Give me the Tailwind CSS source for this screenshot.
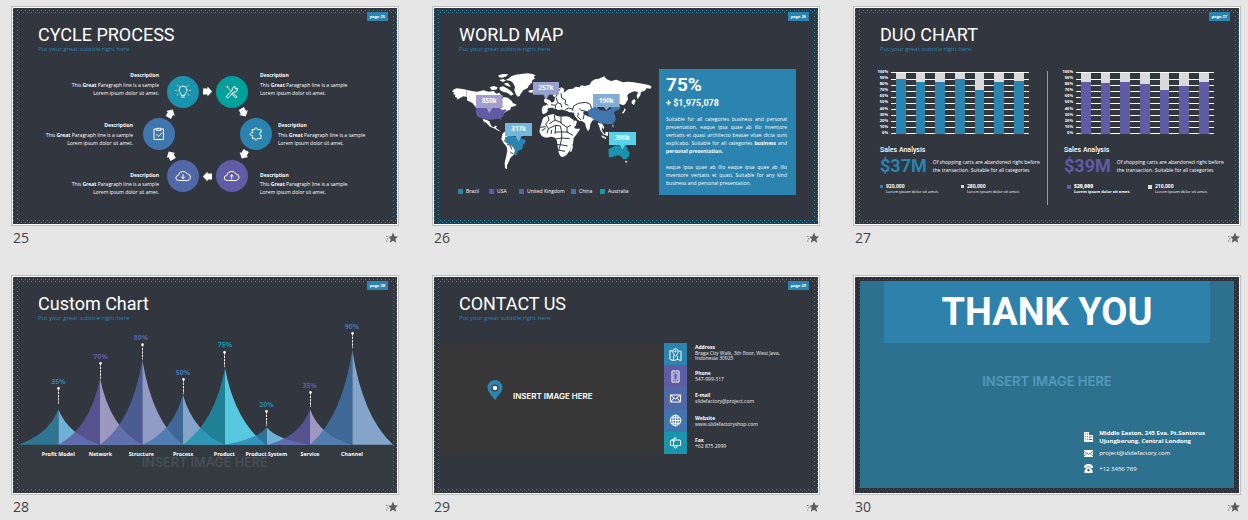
<!DOCTYPE html>
<html lang="en">
<head>
<meta charset="utf-8">
<meta name="viewport" content="width=device-width, initial-scale=1">
<title>Slide sorter</title>
<script src="https://cdn.jsdelivr.net/npm/@tailwindcss/browser@4"></script>
</head>
<body class="bg-[#e6e6e6] font-['Open_Sans','Noto_Sans',sans-serif] text-white">

<!-- Shared symbols -->
<svg class="absolute h-0 w-0" aria-hidden="true">
  <defs>
    <pattern id="dots-row" width="4" height="4" patternUnits="userSpaceOnUse"><path fill="#2c8cae" d="M0 2h1v1H0zM2 0h1v1H2z"/></pattern>
    <pattern id="dots-left" width="8" height="4" patternUnits="userSpaceOnUse"><path fill="#2c8cae" d="M0 0h1v1H0zM4 2h1v1H4z"/></pattern>
    <pattern id="dots-right" width="4" height="4" patternUnits="userSpaceOnUse"><path fill="#2c8cae" d="M0 0h1v1H0zM3 2h1v1H3z"/></pattern>
    <symbol id="frame" viewBox="0 0 384 216">
      <rect x="5" y="2" width="379" height="3" fill="url(#dots-row)"/>
      <rect x="5" y="212" width="379" height="3" fill="url(#dots-row)"/>
      <rect y="0" width="5" height="216" fill="url(#dots-left)"/>
      <rect x="380" y="5" width="4" height="207" fill="url(#dots-right)"/>
    </symbol>
    <symbol id="star" viewBox="0 0 12 12">
      <path fill="#5c5c5c" d="M7 .5l1.500 3.700 3.500.3-2.700 2.400.9 3.900L7 8.700l-3.200 2.100.9-3.900L2.400 4.700l3.100-.5z"/>
      <path fill="#777" d="M0 4h1.400v1H0zM1 6.200h1.400v1H1zM0 8.400h1.400v1H0z"/>
    </symbol>
    <symbol id="arrow" viewBox="-5 -5 10 10"><path fill="#fff" d="M-4.500-3H0v-2l4.600 5L0 5V3h-4.500z"/></symbol>
  </defs>
</svg>

<main class="grid grid-cols-3 gap-x-[33px] gap-y-[27px] pt-[6px] pr-[7px] pl-[11px]">

  <!-- 25 -->
  <figure>
    <div class="border border-[#bdbdbd] bg-white p-px">
      <section class="relative aspect-[16/9] overflow-hidden bg-[#32363f]">
        <svg class="absolute inset-0 h-full w-full" aria-hidden="true"><use href="#frame"/></svg>
        <header class="flex items-start justify-between pr-[9px] pl-[25px]">
          <div class="pt-[17px]">
            <h2 class="font-[Roboto] text-[18px] leading-[20px]">CYCLE PROCESS</h2>
            <p class="text-[6px] leading-[8px] text-[#2c82b4]">Put your great subtitle right here</p>
          </div>
          <span class="relative mt-[4px] bg-[#2b83b0] px-[3px] text-[4px] leading-[9px] font-bold">page 25</span>
        </header>
        <div class="relative mt-[18px] text-[5px] leading-[8px]">
          <svg class="absolute top-[4px] left-[129px] h-[118px] w-[131px]" viewBox="142 75 131 118" fill="none" stroke="#fff" stroke-linecap="round" stroke-linejoin="round" aria-hidden="true">
            <g stroke="none">
              <circle cx="183" cy="92" r="16" fill="#1a93ad"/><circle cx="232" cy="92" r="16" fill="#00a19b"/>
              <circle cx="159" cy="134" r="16" fill="#4175ad"/><circle cx="256" cy="134" r="16" fill="#2b83b0"/>
              <circle cx="183" cy="176" r="16" fill="#5067a8"/><circle cx="232" cy="176" r="16" fill="#5f5ca5"/>
              <use href="#arrow" x="-5" y="-5" width="10" height="10" transform="translate(207.500 91.500)"/>
              <use href="#arrow" x="-5" y="-5" width="10" height="10" transform="translate(243.500 112.500) rotate(60)"/>
              <use href="#arrow" x="-5" y="-5" width="10" height="10" transform="translate(244 154.500) rotate(120)"/>
              <use href="#arrow" x="-5" y="-5" width="10" height="10" transform="translate(207.500 176.500) rotate(180)"/>
              <use href="#arrow" x="-5" y="-5" width="10" height="10" transform="translate(171 155.500) rotate(240)"/>
              <use href="#arrow" x="-5" y="-5" width="10" height="10" transform="translate(170.500 113.500) rotate(300)"/>
            </g>
            <!-- bulb -->
            <path stroke-width=".9" d="M181.300 95c0-1.700-2.300-2.700-2.300-5a4 4 0 018 0c0 2.300-2.300 3.300-2.300 5zM181.500 97h3M176.500 90.500h-.6M189.500 90.500h.6M178 86l-.6-.5M188 86l.6-.5M178 94.500l-.6.5M188 94.500l.6.5"/>
            <!-- tools -->
            <path stroke-width="1" d="M227 87l3.500 3.500M226.500 86.500l1.500.5M233 93l3.500 3.200a.8.8 0 01-1.300 1.300L232 94M237 88.500l-1.800.4.3-2a2.600 2.600 0 00-3.200 3.400l-5.600 5.500a1.100 1.100 0 001.700 1.700l5.500-5.600a2.600 2.600 0 003.400-3.200z"/>
            <!-- clipboard -->
            <path stroke-width="1" d="M157 129h-3v10.500h9.500V129H161M157 128.300h4v2h-4zM156.500 134.500l2 2 3.500-3.700"/>
            <!-- puzzle -->
            <path stroke-width="1" d="M252.500 129.500h2.200c-.5-2 3-2 2.500 0h3.800v3.200c-2-.6-2 2.800 0 2.300v3.500h-3.700c.5 1.900-3 1.900-2.500 0h-2.300v-3c-3 1-3.400-3.700 0-2.800z"/>
            <!-- clouds -->
            <path stroke-width="1" d="M178.500 180.500a2.500 2.500 0 01-.3-5 5 5 0 019.300-1.500 3.300 3.300 0 01.500 6.500zM183 174.500v4M181.500 177l1.500 1.500 1.500-1.500"/>
            <path stroke-width="1" d="M227 180.500a2.500 2.500 0 01-.3-5 5 5 0 019.300-1.500 3.300 3.300 0 01.500 6.500zM231.700 179v-4M230.200 176.300l1.500-1.500 1.500 1.500"/>
          </svg>
          <div class="relative grid grid-cols-2 gap-y-[24px]">
            <div class="pr-[46px] text-right"><h3 class="mb-[2px] font-bold">Description</h3><p>This <b>Great</b> Paragraph line is a sample<br>Lorem ipsum dolor sit amet.</p></div>
            <div class="pl-[55px]"><h3 class="mb-[2px] font-bold">Description</h3><p>This <b>Great</b> Paragraph line is a sample<br>Lorem ipsum dolor sit amet.</p></div>
            <div class="pr-[72px] text-right"><h3 class="mb-[2px] font-bold">Description</h3><p>This <b>Great</b> Paragraph line is a sample<br>Lorem ipsum dolor sit amet.</p></div>
            <div class="pl-[73px]"><h3 class="mb-[2px] font-bold">Description</h3><p>This <b>Great</b> Paragraph line is a sample<br>Lorem ipsum dolor sit amet.</p></div>
            <div class="pr-[46px] text-right"><h3 class="mb-px font-bold">Description</h3><p>This <b>Great</b> Paragraph line is a sample<br>Lorem ipsum dolor sit amet.</p></div>
            <div class="pl-[55px]"><h3 class="mb-px font-bold">Description</h3><p>This <b>Great</b> Paragraph line is a sample<br>Lorem ipsum dolor sit amet.</p></div>
          </div>
        </div>
      </section>
    </div>
    <figcaption class="flex items-center justify-between pt-[2px] pr-px pl-[2px] text-[14px] leading-[20px] text-[#444]">25<svg class="h-[12px] w-[12px]" aria-hidden="true"><use href="#star"/></svg></figcaption>
  </figure>

  <!-- 26 -->
  <figure>
    <div class="border border-[#bdbdbd] bg-white p-px">
      <section class="relative aspect-[16/9] overflow-hidden bg-[#32363f]">
        <svg class="absolute inset-0 h-full w-full" aria-hidden="true"><use href="#frame"/></svg>
        <header class="flex items-start justify-between pr-[9px] pl-[25px]">
          <div class="pt-[17px]">
            <h2 class="font-[Roboto] text-[18px] leading-[20px]">WORLD MAP</h2>
            <p class="text-[6px] leading-[8px] text-[#2c82b4]">Put your great subtitle right here</p>
          </div>
          <span class="relative mt-[4px] bg-[#2b83b0] px-[3px] text-[4px] leading-[9px] font-bold">page 26</span>
        </header>
        <div class="relative flex items-start justify-between pr-[22px] pl-[11px]">
          <div class="pt-[7px]">
            <svg class="h-[120px] w-[210px]" viewBox="0 0 630 360" role="img" aria-label="World map">
              <g fill="#fff">
                <path d="M24 90l10-5 14 1 17 3v22l-10-2-8 4-12 6 2-6-7-2 1-6-7-3 4-4-6-3z"/>
                <path d="M66 90l14 3 16 2 20-4 14 4 16-2 8 8 10-3 4 8-6 5 8 8 6-8 12 2 10 8 6 8 12 6-8 4-10 2-2 8-10 4-12 8-18-4H96l-4-16-10-12-16-8z"/>
                <path d="M160 46l14-4 16 1-6 6-12 4-10-1zM163 60l12-3 8 5-10 4zM178 70l10-2 4 5 6 8-8-2-10-4zM134 82l12-4 12 4-4 7-14 1zM164 82l10-3 12 6 12 8 8 10-8 4-10-8-14-4-10-6z"/>
                <path d="M190 56l10-8 12-4 16-2 20-2 14 2 10 4-6 4 4 6-8 4-2 10-8 6-4 8-12 6-8 10-4 8-6 2-6-8-4-12 2-10-8-14-8-4-12-2z"/>
                <path d="M250 92l12-3 7 4-8 5-9-1z"/>
                <path d="M113 176l12 4 8 4 4 10 4 6 6 1 4-4 4 1-2 6 8 6 6 4-6-1-14-8-12-5-8-8-6-6-2 2-4-6z"/>
                <path d="M172 222l6-7 14 2 12 5 4 6-14 0-10 8 0 12 10 4 14 12 4 12-6 8-10 10-6 14-4 8 0 12-6-4-1-16 4-16 4-20-2-12-10-12-6-10z"/>
                <path d="M290 150l4-12 10-2 2-6-6-6 6-6 8 2 6 8 8-4 2-12-6-4 2-10 12-12 12-4 8 6-2 10 14-10 14-2 8-6 12 2 4-6 12 2 14-4 6-10 10-6 12-2 16-7 6 8 14 6 16-4 20 8 14-2 18 2 26 4 20 4 8 5-4 6-12-1-4 7-12 4-2 10-8 12-3-10 4-12-12-2-14 6-6 6 2 12-8 14-6 4-16-6-16 8-20 2-14-6-12 8-10 10 2 8-10 6-8-10-14-2-4 8 10 10-4 6-16 4-14-14-2-10-18-2-12 2-12-4-12-8-6 4 6 10-8-2-8-10-8 4-6 8-10 3z"/>
                <path d="M298 118l5-8 3 8 5 8-10 3-4-5z"/>
                <path d="M294 174l14-8 18-4 8 5 14 3 14-1 8 1 8 22 14 14h14l-12 18-8 10-2 18-6 8-4 12-10 14-10 5-8-2-6-14-2-16-2-16-6-10-10-3-18 3-12-5-7-13 3-14z"/>
                <path d="M377 262l5-8 2 6-4 14-5 2z"/>
                <path d="M362 172l10-2 10 8 14 6-4 14-12 6-8-12z"/>
                <path d="M392 158l22 2 12 8 26 8-10 6-6 10-2 14-5 8-6-12-3-12-8-6-14-4z"/>
                <path d="M458 188l12 2 8 12-2 6-6-8 2 14 8 10-3 2-10-14-4-12zM470 226l14 7-2 4-12-6zM482 215l8 2-2 12-8-4zM560 123l8-6 4 5-5 14-7-6zM530 160l6-8 3-8 3 6-6 10zM502 192l4 6-2 6zM540 302l8 2-5 5z"/>
              </g>
              <!-- country borders -->
              <g fill="none" stroke="#32363f" stroke-width="3">
                <path d="M308 166l4 14-10 12 8 14-4 14M328 164l2 16-18 12M348 170v20l18 12M330 180l20 8M310 206l22-10 14 2M332 196l-2 26M346 198l4 18 20 0M330 216l20 0M350 216l0 18 24 2M326 238l24-4M350 234l-4 20 22 4M326 254l20 0M346 254l-6 20M366 202l0 14 18 10M366 202l12-6M340 270l20 4M286 202l16-2M290 212l12-8M318 222l2-12"/>
                <path d="M318 134l14 2 6-8 10 4 2 10M332 136l-2 12M338 128l-4-14M348 100l2 14 12 6-2 12 10 4M332 112l8-18 6-8M360 150l10-6 14 4M382 152l4-14 14-8 22-3 14 6 4 14-12 8-20-4-6-6M400 158l-2 12 10 10M418 162l-4 16M384 166l8 8-6 10"/>
                <path d="M186 252l10 4 4 12M196 276l8 6M184 240l-8 4"/>
                <path d="M308 147l14-3 12 9 16-3 20 6-6 8-20 2-12-6-16-2z" fill="#32363f"/>
              </g>
              <path fill="#5f5ca5" d="M93 144h72l6 6 10-2 4 3-8 8-2 10-8 6 2 6-8-5-22 3-14 0-16-6-12-3-4-12z"/>
              <path fill="#2b83b0" d="M180 232l12-5 10-1 6 4 12-2 6 6 16 6-1 8-7 6-2 14-12 4-4 10-4 6-5-8 3-10-6-10-10-8-14-6z"/>
              <path fill="#4175ad" d="M428 152l14-8 8-5 14 10 18 4 16-6-2-8 12-4 18 6-4 8-10 4-6 6 4 6 2 14-8 12-14 2-10-2-12 0-10-8-10-2-10-10-8-6z"/>
              <path fill="#1a93ad" d="M490 268l12-6 12-6 10 2 8 10 10-13 6 14 5 8-1 12-8 9-10-1-6-9-10-2-18 6-8 0z"/>
              <path fill="#5067a8" d="M304 134l6-2-3 5z"/>
              <g>
                <path fill="#a29dca" d="M93 105h80v39h-31l-9 16-8-16H93z"/><path fill="#97a2cf" d="M264 66h78v38h-30l-9 16-8-16h-31z"/>
                <path fill="#85acd5" d="M444 102h80v39h-31l-9 10-8-10h-32z"/><path fill="#72b7dd" d="M180 189h81v39h-31l-9 17-9-17h-32z"/>
                <path fill="#59d1e9" d="M492 216h81v39h-32l-9 14-8-14h-32z"/>
              </g>
              <g class="text-[19px] font-bold" fill="#fff" text-anchor="middle">
                <text x="133" y="129">850k</text><text x="303" y="90">257k</text><text x="484" y="128">190k</text><text x="221" y="213">317k</text><text x="532" y="239">390k</text>
              </g>
            </svg>
            <ul class="mt-[7px] ml-[13px] grid grid-cols-[31px_30px_52px_29px_auto] text-[5px] leading-[8px]">
              <li class="flex items-center gap-[3px]"><i class="size-[5px] bg-[#2b83b0]"></i>Brazil</li>
              <li class="flex items-center gap-[3px]"><i class="size-[5px] bg-[#5f5ca5]"></i>USA</li>
              <li class="flex items-center gap-[3px]"><i class="size-[5px] bg-[#5067a8]"></i>United Kingdom</li>
              <li class="flex items-center gap-[3px]"><i class="size-[5px] bg-[#4175ad]"></i>China</li>
              <li class="flex items-center gap-[3px]"><i class="size-[5px] bg-[#1a93ad]"></i>Australia</li>
            </ul>
          </div>
          <div class="mt-[16px] h-[126px] w-[137px] bg-[#2b83b0] pt-[6px] pr-[9px] pl-[7px] text-[5px] leading-[8px]">
            <p class="font-[Roboto] text-[19px] leading-[20px] font-bold">75%</p>
            <p class="mt-[3px] font-[Roboto] text-[9px] leading-[11px] font-bold">+ $1,975,078</p>
            <p class="mt-[6px] [&>span]:block [&>span]:[text-align-last:justify]"><span>Suitable for all categories business and personal</span><span>presentation, eaque ipsa quae ab illo inventore</span><span>veritatis et quasi architecto beatae vitae dicta sunt</span><span>explicabo. Suitable for all categories <b>business</b> and</span><b>personal presentation.</b></p>
            <p class="mt-[8px] [&>span]:block [&>span]:[text-align-last:justify]"><span>eaque ipsa quae ab illo eaque ipsa quae ab illo</span><span>inventore veritatis et quasi, Suitable for any kind</span>business and personal presentation.</p>
          </div>
        </div>
      </section>
    </div>
    <figcaption class="flex items-center justify-between pt-[2px] pr-px pl-[2px] text-[14px] leading-[20px] text-[#444]">26<svg class="h-[12px] w-[12px]" aria-hidden="true"><use href="#star"/></svg></figcaption>
  </figure>

  <!-- 27 -->
  <figure>
    <div class="border border-[#bdbdbd] bg-white p-px">
      <section class="relative aspect-[16/9] overflow-hidden bg-[#32363f]">
        <svg class="absolute inset-0 h-full w-full" aria-hidden="true"><use href="#frame"/></svg>
        <header class="flex items-start justify-between pr-[9px] pl-[25px]">
          <div class="pt-[17px]">
            <h2 class="font-[Roboto] text-[18px] leading-[20px]">DUO CHART</h2>
            <p class="text-[6px] leading-[8px] text-[#2c82b4]">Put your great subtitle right here</p>
          </div>
          <span class="relative mt-[4px] bg-[#2b83b0] px-[3px] text-[4px] leading-[9px] font-bold">page 27</span>
        </header>
        <div class="relative mt-[16px] flex items-start pl-[22px]">
          <div class="w-[170px]">
            <div class="flex gap-[3px]">
              <div class="flex h-[67px] w-[11px] flex-col justify-between text-right text-[4px] leading-[6px] font-bold"><span>100%</span><span>90%</span><span>80%</span><span>70%</span><span>60%</span><span>50%</span><span>40%</span><span>30%</span><span>20%</span><span>10%</span><span>0%</span></div>
              <svg class="h-[67px] w-[138px]" viewBox="153 207 414 201" role="img" aria-label="Stacked column chart">
                <path stroke="#fff" stroke-width="3" d="M153 217.500h414M153 238.500h414M153 256.500h414M153 274.500h414M153 292.500h414M153 310.500h414M153 328.500h414M153 346.500h414M153 364.500h414M153 382.500h414M153 400.500h414"/>
                <path fill="#dadada" d="M168 219h30v24h-30zM228 219h27v30h-27zM285 219h30v30h-30zM345 219h30v24h-30zM405 219h27v54h-27zM462 219h30v30h-30zM522 219h30v27h-30z"/>
                <path fill="#2b83b0" d="M168 237h30v165h-30zM228 246h27v156h-27zM285 246h30v156h-30zM345 237h30v165h-30zM405 270h27v132h-27zM462 246h30v156h-30zM522 243h30v159h-30z"/>
              </svg>
            </div>
            <div class="pl-[3px]">
              <h3 class="mt-[10px] font-[Roboto] text-[7px] leading-[9px] font-medium">Sales Analysis</h3>
              <div class="flex items-center gap-[6px]">
                <strong class="font-[Roboto] text-[18px] leading-[22px] font-bold text-[#2b83b0]">$37M</strong>
                <p class="text-[5px] leading-[8px] whitespace-nowrap">Of shopping carts are abandoned right before<br>the transaction. Suitable for all categories</p>
              </div>
              <div class="mt-[6px] grid grid-cols-[81px_auto] text-[4px] leading-[6px]">
                <div class="flex gap-[3px]"><i class="mt-[2px] size-[3px] bg-[#2b83b0]"></i><p><b class="block text-[5px]">920,000</b>Lorem ipsum dolor sit amet.</p></div>
                <div class="flex gap-[3px]"><i class="mt-[2px] size-[3px] bg-[#dadada]"></i><p><b class="block text-[5px]">280,000</b>Lorem ipsum dolor sit amet.</p></div>
              </div>
            </div>
          </div>
          <div class="mt-[2px] h-[134px] w-px bg-[#999ba0]"></div>
          <div class="ml-[14px] w-[165px]">
            <div class="flex gap-[3px]">
              <div class="flex h-[67px] w-[11px] flex-col justify-between text-right text-[4px] leading-[6px] font-bold"><span>100%</span><span>90%</span><span>80%</span><span>70%</span><span>60%</span><span>50%</span><span>40%</span><span>30%</span><span>20%</span><span>10%</span><span>0%</span></div>
              <svg class="h-[67px] w-[138px]" viewBox="153 207 414 201" role="img" aria-label="Stacked column chart">
                <path stroke="#fff" stroke-width="3" d="M153 217.500h414M153 238.500h414M153 256.500h414M153 274.500h414M153 292.500h414M153 310.500h414M153 328.500h414M153 346.500h414M153 364.500h414M153 382.500h414M153 400.500h414"/>
                <path fill="#dadada" d="M168 219h30v30h-30zM228 219h27v33h-27zM285 219h30v30h-30zM345 219h30v36h-30zM405 219h27v54h-27zM462 219h30v42h-30zM522 219h30v30h-30z"/>
                <path fill="#5f5ca5" d="M168 246h30v156h-30zM228 249h27v153h-27zM285 246h30v156h-30zM345 252h30v150h-30zM405 270h27v132h-27zM462 258h30v144h-30zM522 246h30v156h-30z"/>
              </svg>
            </div>
            <div class="pl-[2px]">
              <h3 class="mt-[10px] font-[Roboto] text-[7px] leading-[9px] font-medium">Sales Analysis</h3>
              <div class="flex items-center gap-[6px]">
                <strong class="font-[Roboto] text-[18px] leading-[22px] font-bold text-[#5f5ca5]">$39M</strong>
                <p class="text-[5px] leading-[8px] whitespace-nowrap">Of shopping carts are abandoned right before<br>the transaction. Suitable for all categories</p>
              </div>
              <div class="mt-[6px] ml-[3px] grid grid-cols-[81px_auto] text-[4px] leading-[6px]">
                <div class="flex gap-[3px]"><i class="mt-[2px] size-[4px] bg-[#5f5ca5]"></i><p class="font-bold"><b class="block text-[5px]">520,000</b>Lorem ipsum dolor sit amet.</p></div>
                <div class="flex gap-[3px]"><i class="mt-[2px] size-[4px] bg-[#dadada]"></i><p><b class="block text-[5px]">210,000</b>Lorem ipsum dolor sit amet.</p></div>
              </div>
            </div>
          </div>
        </div>
      </section>
    </div>
    <figcaption class="flex items-center justify-between pt-[2px] pr-px pl-[2px] text-[14px] leading-[20px] text-[#444]">27<svg class="h-[12px] w-[12px]" aria-hidden="true"><use href="#star"/></svg></figcaption>
  </figure>

  <!-- 28 -->
  <figure>
    <div class="border border-[#bdbdbd] bg-white p-px">
      <section class="relative aspect-[16/9] overflow-hidden bg-[#32363f]">
        <header class="flex items-start justify-between pr-[9px] pl-[25px]">
          <div class="pt-[17px]">
            <h2 class="font-[Roboto] text-[18px] leading-[20px]">Custom Chart</h2>
            <p class="text-[6px] leading-[8px] text-[#2c82b4]">Put your great subtitle right here</p>
          </div>
          <span class="relative mt-[4px] bg-[#2b83b0] px-[3px] text-[4px] leading-[9px] font-bold">page 28</span>
        </header>
        <svg class="block w-full" viewBox="39 162 1152 513" role="img" aria-label="Custom peak chart">
          <rect x="54" y="530" width="1128" height="130" fill="#333a40"/>
          <text class="font-[Inter] text-[38px] font-semibold" x="614" y="597" text-anchor="middle" fill="#474e56">INSERT IMAGE HERE</text>
          <g fill-opacity=".94">
            <path fill="#72b9de" d="M175 424Q205 500 300 530H175z"/><path fill="#2f7896" d="M175 424Q145 500 54 530H175z"/>
            <path fill="#a39ecb" d="M300 330Q330 480 427 530H300z"/><path fill="#5e5aa4" fill-opacity=".8" d="M300 330Q270 480 175 530H300z"/>
            <path fill="#97a2cf" d="M427 275Q457 460 548 530H427z"/><path fill="#5067a8" fill-opacity=".8" d="M427 275Q397 460 300 530H427z"/>
            <path fill="#89abd3" d="M549 380Q579 490 675 530H549z"/><path fill="#4175ad" fill-opacity=".8" d="M549 380Q519 490 427 530H549z"/>
            <path fill="#59d1e9" d="M675 300Q705 460 798 530H675z"/><path fill="#1a93ad" fill-opacity=".8" d="M675 300Q645 460 549 530H675z"/>
            <path fill="#72b9de" d="M800 478Q830 515 930 530H800z"/><path fill="#2b83b0" fill-opacity=".8" d="M800 478Q770 515 675 530H800z"/>
            <path fill="#a39ecb" d="M930 424Q960 505 1057 530H930z"/><path fill="#5e5aa4" fill-opacity=".8" d="M930 424Q900 505 805 530H930z"/>
            <path fill="#89abd3" d="M1057 245Q1087 445 1179 530H1057z"/><path fill="#4175ad" fill-opacity=".8" d="M1057 245Q1027 445 930 530H1057z"/>
          </g>
          <path fill="none" stroke="#fff" stroke-width="3" stroke-dasharray="7 3" d="M175.500 361v46M301.500 286v46M427.500 230v44M550.500 334v44M673.500 253v44M799.500 430v44M931.500 373v44M1057.500 196v44"/>
          <path stroke="#fff" stroke-width="8" stroke-linecap="round" d="M175.500 361h.1M301.500 286h.1M427.500 230h.1M550.500 334h.1M673.500 253h.1M799.500 430h.1M931.500 373h.1M1057.500 196h.1"/>
          <g class="text-[21px] font-bold" text-anchor="middle">
            <text x="175" y="348" fill="#2b83b0">35%</text><text x="301" y="273" fill="#5f5ca5">70%</text><text x="423" y="216" fill="#5067a8">80%</text><text x="549" y="321" fill="#4175ad">50%</text><text x="675" y="237" fill="#1a93ad">75%</text><text x="799" y="417" fill="#2b83b0">20%</text><text x="929" y="360" fill="#5f5ca5">35%</text><text x="1056" y="183" fill="#4175ad">90%</text>
          </g>
          <g class="text-[16px] font-bold" text-anchor="middle" fill="#fff">
            <text x="175" y="563">Profit Model</text><text x="301" y="563">Network</text><text x="424" y="563">Structure</text><text x="549" y="563">Process</text><text x="673" y="563">Product</text><text x="799" y="563">Product System</text><text x="930" y="563">Service</text><text x="1056" y="563">Channel</text>
          </g>
        </svg>
        <svg class="absolute inset-0 h-full w-full" aria-hidden="true"><use href="#frame"/></svg>
      </section>
    </div>
    <figcaption class="flex items-center justify-between pt-[2px] pr-px pl-[2px] text-[14px] leading-[20px] text-[#444]">28<svg class="h-[12px] w-[12px]" aria-hidden="true"><use href="#star"/></svg></figcaption>
  </figure>

  <!-- 29 -->
  <figure>
    <div class="border border-[#bdbdbd] bg-white p-px">
      <section class="relative aspect-[16/9] overflow-hidden bg-[#32363f]">
        <svg class="absolute inset-0 h-full w-full" aria-hidden="true"><use href="#frame"/></svg>
        <header class="flex items-start justify-between pr-[9px] pl-[25px]">
          <div class="pt-[17px]">
            <h2 class="font-[Roboto] text-[18px] leading-[20px]">CONTACT US</h2>
            <p class="text-[6px] leading-[8px] text-[#2c82b4]">Put your great subtitle right here</p>
          </div>
          <span class="relative mt-[4px] bg-[#2b83b0] px-[3px] text-[4px] leading-[9px] font-bold">page 29</span>
        </header>
        <div class="relative mt-[21px] flex pl-[6px]">
          <div class="flex h-[111px] w-[224px] items-center gap-[10px] bg-[#373737] pl-[47px]">
            <svg class="mb-[16px] h-[21px] w-[16px]" viewBox="0 0 16 21" aria-hidden="true"><path fill="#2b83b0" d="M8 0a7.500 7.500 0 017.500 7.500C15.500 12.500 11 15 8 20.500 5 15 .5 12.500.5 7.500A7.500 7.500 0 018 0z"/><circle cx="8" cy="8" r="3.500" fill="#32363f"/><circle cx="8" cy="8" r="2.300" fill="#fff"/></svg>
            <span class="mb-[6px] font-[Inter] text-[8px] font-semibold">INSERT IMAGE HERE</span>
          </div>
          <ul class="grid grid-rows-5 text-[5px] leading-[5px] text-white/90 [&_b]:block [&_b]:leading-[8px] [&_b]:text-white [&_svg]:size-[13px] [&>li]:flex [&>li]:gap-[8px] [&>li>span]:flex [&>li>span]:w-[23px] [&>li>span]:items-center [&>li>span]:justify-center">
            <li><span class="bg-[#2b83b0]"><svg viewBox="0 0 13 13" fill="none" stroke="#fff" stroke-linejoin="round" aria-hidden="true"><path d="M4 3.500L1 2.500v9L4.500 12.500l4-1 3.500 1v-9L9.500 3M4.500 12V7.500M8.500 8v3.500"/><path d="M6.500 8.500C5 6.500 3.800 5.200 3.800 3.500a2.700 2.700 0 015.400 0c0 1.700-1.200 3-2.700 5z"/><circle cx="6.500" cy="3.500" r=".7"/></svg></span><p><b>Address</b>Braga City Walk, 3th floor, West Java,<br>Indonesia 30925</p></li>
            <li><span class="bg-[#5f5ca5]"><svg viewBox="0 0 13 13" fill="none" stroke="#fff" aria-hidden="true"><path d="M3 1h7v11H3z"/><path stroke-width=".7" d="M4.800 3h3.400v7H4.800z"/></svg></span><p class="pt-[4px]"><b>Phone</b>547-999-317</p></li>
            <li><span class="bg-[#5067a8]"><svg viewBox="0 0 13 13" fill="none" stroke="#fff" aria-hidden="true"><path d="M1.500 3h10v7h-10zM1.500 3l5 4 5-4M1.500 10l3.500-4M11.500 10L8 6"/></svg></span><p class="pt-[4px]"><b>E-mail</b>slidefactory@project.com</p></li>
            <li><span class="bg-[#4175ad]"><svg viewBox="0 0 13 13" fill="none" stroke="#fff" aria-hidden="true"><circle cx="6.500" cy="6.500" r="5.300"/><ellipse cx="6.500" cy="6.500" rx="2.600" ry="5.300"/><path d="M6.500 1v11M1 6.500h11M2 3.800h9M2 9.200h9"/></svg></span><p class="pt-[4px]"><b>Website</b>www.slidefactoryshop.com</p></li>
            <li><span class="bg-[#1a93ad]"><svg viewBox="0 0 13 13" fill="none" stroke="#fff" aria-hidden="true"><path d="M4 9.500H1.500V5.500a1.500 1.500 0 013 0v4H11.500V5c0-.8-.5-1-1-1H3M5 6V2h2.500M5 9.500v1.500l1.500 1L8 11V9.500"/></svg></span><p class="pt-[4px]"><b>Fax</b>+62 875 2999</p></li>
          </ul>
        </div>
      </section>
    </div>
    <figcaption class="flex items-center justify-between pt-[2px] pr-px pl-[2px] text-[14px] leading-[20px] text-[#444]">29<svg class="h-[12px] w-[12px]" aria-hidden="true"><use href="#star"/></svg></figcaption>
  </figure>

  <!-- 30 -->
  <figure>
    <div class="border border-[#bdbdbd] bg-white p-px">
      <section class="relative aspect-[16/9] overflow-hidden bg-[#2b303b] px-[5px] pt-[4px] pb-[5px]">
        <svg class="absolute inset-0 h-full w-full opacity-60" aria-hidden="true"><use href="#frame"/></svg>
        <div class="relative flex h-full flex-col items-center bg-[#2e718f]">
          <h2 class="w-[326px] bg-[#2d81aa] text-center font-[Roboto] text-[38px] leading-[62px] font-bold">THANK YOU</h2>
          <p class="mt-[30px] font-[Inter] text-[13px] leading-[16px] font-semibold text-[#5299bb]">INSERT IMAGE HERE</p>
          <address class="mt-[40px] mr-[29px] grid grid-cols-[9px_auto] items-center gap-x-[6px] gap-y-[4px] self-end text-[6px] leading-[8px] not-italic">
            <svg class="size-[10px]" viewBox="0 0 10 10" aria-hidden="true"><path fill="#fff" fill-rule="evenodd" d="M0 0h5v3h4v7H0zM1 1.500v1h1v-1zM3 1.500v1h1v-1zM1 4v1h1V4zM3 4v1h1V4zM1 6.500v1h1v-1zM3 6.500v1h1v-1zM5 4.500v1h3v-1zM5 7v1h3V7z"/></svg>
            <p class="font-bold">Middle Easton, 245 Eva. Pt.Santerus<br>Ujungberung, Central Londong</p>
            <svg class="h-[7px] w-[9px]" viewBox="0 0 9 7" aria-hidden="true"><path fill="#fff" d="M0 0h9v7H0z"/><path fill="none" stroke="#2e718f" stroke-width=".8" d="M0 1.500l4.500 2.800L9 1.500M0 6l3-2.500M9 6L6 3.500"/></svg>
            <p>project@slidefactory.com</p>
            <svg class="mt-[3px] h-[9px] w-[9px]" viewBox="0 0 9 9" aria-hidden="true"><path fill="#fff" fill-rule="evenodd" d="M0 3.200C0 1 2 0 4.500 0S9 1 9 3.200V4H6.500V2.500h-4V4H0zM3 3.200h3L8.500 6.500V9h-8V6.500zM4.500 4.800a1.300 1.300 0 100 2.600 1.300 1.300 0 000-2.600z"/></svg>
            <p class="mt-[3px]">+12 3456 789</p>
          </address>
        </div>
      </section>
    </div>
    <figcaption class="flex items-center justify-between pt-[2px] pr-px pl-[2px] text-[14px] leading-[20px] text-[#444]">30<svg class="h-[12px] w-[12px]" aria-hidden="true"><use href="#star"/></svg></figcaption>
  </figure>
</main>
</body>
</html>
